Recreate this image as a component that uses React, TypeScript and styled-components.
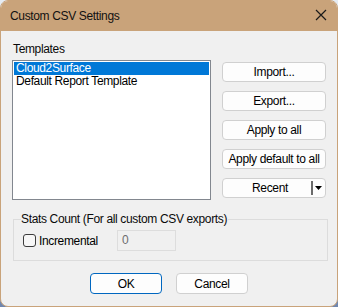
import React, { useState } from "react";
import styled, { createGlobalStyle } from "styled-components";

const GlobalStyle = createGlobalStyle`
    html, body {
        margin: 0;
        padding: 0;
        background: linear-gradient(180deg, #e6ecf3 0%, #6f86ae 100%);
    }
    body {
        font-family: "Liberation Sans", Arial, sans-serif;
        font-size: 12px;
        letter-spacing: -0.35px;
        color: #000000;
    }
`;

const templates = ["Cloud2Surface", "Default Report Template"];

const App = () => {
    const [selected, setSelected] = useState<number>(0);
    const [incremental, setIncremental] = useState<boolean>(false);

    return (
        <>
            <GlobalStyle />
            <Window>
                <TitleBar>
                    <Title>Custom CSV Settings</Title>
                    <CloseButton>
                        <svg width="12" height="12" viewBox="0 0 12 12">
                            <path d="M1 1 L11 11 M11 1 L1 11" stroke="#1a1a1a" strokeWidth="1.2" />
                        </svg>
                    </CloseButton>
                </TitleBar>
                <Body>
                    <Label>Templates</Label>
                    <TemplatesRow>
                        <ListBox>
                            {templates.map((name, id) => (
                                <ListItem key={id} $selected={id === selected} onClick={() => setSelected(id)}>
                                    {name}
                                </ListItem>
                            ))}
                        </ListBox>
                        <ButtonColumn>
                            <SideButton>Import...</SideButton>
                            <SideButton>Export...</SideButton>
                            <SideButton>Apply to all</SideButton>
                            <SideButton>Apply default to all</SideButton>
                            <SplitButton>
                                <SplitLabel>Recent</SplitLabel>
                                <SplitDivider />
                                <SplitArrow>
                                    <svg width="7" height="4" viewBox="0 0 7 4">
                                        <path d="M0 0 H7 L3.5 4 Z" fill="#000000" />
                                    </svg>
                                </SplitArrow>
                            </SplitButton>
                        </ButtonColumn>
                    </TemplatesRow>
                    <GroupBox>
                        <GroupLegend>Stats Count (For all custom CSV exports)</GroupLegend>
                        <GroupRow>
                            <CheckLabel onClick={() => setIncremental(!incremental)}>
                                <CheckBox $checked={incremental}>
                                    {incremental && (
                                        <svg width="9" height="9" viewBox="0 0 9 9">
                                            <path d="M1 4.5 L3.5 7 L8 1.5" stroke="#ffffff" strokeWidth="1.4" fill="none" />
                                        </svg>
                                    )}
                                </CheckBox>
                                Incremental
                            </CheckLabel>
                            <NumberField>0</NumberField>
                        </GroupRow>
                    </GroupBox>
                    <Footer>
                        <DialogButton $primary>OK</DialogButton>
                        <DialogButton>Cancel</DialogButton>
                    </Footer>
                </Body>
            </Window>
        </>
    );
};

const Window = styled.div`
    box-sizing: border-box;
    width: 338px;
    height: 307px;
    display: flex;
    flex-direction: column;
    border: 1px solid #c9a37a;
    border-radius: 8px;
    overflow: hidden;
    background-color: #f0f0f0;
`;

const TitleBar = styled.div`
    display: flex;
    align-items: center;
    justify-content: space-between;
    height: 30px;
    padding: 0 10px 0 9px;
    background-color: #c9a37a;
    flex-shrink: 0;
`;

const Title = styled.span`
    font-size: 12px;
    color: #111111;
    padding-bottom: 1px;
`;

const CloseButton = styled.div`
    display: flex;
    align-items: center;
    justify-content: center;
    width: 12px;
    height: 12px;
    margin-bottom: 2px;
`;

const Body = styled.div`
    display: flex;
    flex-direction: column;
    padding: 10px 10px 0 11px;
    flex: 1;
`;

const Label = styled.div`
    height: 14px;
    line-height: 14px;
    padding-left: 1px;
    margin-top: 1px;
    color: #0a0a0a;
`;

const TemplatesRow = styled.div`
    display: flex;
    flex-direction: row;
    margin-top: 4px;
`;

const ListBox = styled.div`
    box-sizing: border-box;
    width: 199px;
    height: 140px;
    border: 1px solid #82878f;
    background-color: #ffffff;
    padding: 1px;
`;

const ListItem = styled.div<{ $selected?: boolean }>`
    height: 13px;
    line-height: 13px;
    padding-left: 2px;
    background-color: ${(p) => (p.$selected ? "#0078d7" : "transparent")};
    color: ${(p) => (p.$selected ? "#ffffff" : "#000000")};
    white-space: nowrap;
    cursor: default;
`;

const ButtonColumn = styled.div`
    display: flex;
    flex-direction: column;
    gap: 9px;
    margin-left: 11px;
    padding-top: 2px;
`;

const SideButton = styled.button`
    box-sizing: border-box;
    width: 104px;
    height: 20px;
    padding: 0;
    border: 1px solid #d0d0d0;
    border-radius: 4px;
    background-color: #fdfdfd;
    font-family: "Liberation Sans", Arial, sans-serif;
    font-size: 12px;
    letter-spacing: -0.35px;
    color: #000000;
    white-space: nowrap;
`;

const SplitButton = styled.div`
    box-sizing: border-box;
    width: 104px;
    height: 20px;
    display: flex;
    align-items: center;
    border: 1px solid #d0d0d0;
    border-radius: 4px;
    background-color: #fdfdfd;
`;

const SplitLabel = styled.span`
    flex: 1;
    text-align: center;
    padding-left: 6px;
`;

const SplitDivider = styled.span`
    width: 2px;
    height: 14px;
    background-color: #6b6b6b;
`;

const SplitArrow = styled.span`
    display: flex;
    align-items: center;
    justify-content: center;
    width: 11px;
    padding-right: 1px;
`;

const GroupBox = styled.fieldset`
    box-sizing: border-box;
    width: 315px;
    height: 49px;
    margin: 12px 0 0 1px;
    padding: 0 0 0 9px;
    border: 1px solid #dcdcdc;
    min-inline-size: auto;
`;

const GroupLegend = styled.legend`
    padding: 0 1px 0 0;
    margin-left: -2px;
    line-height: 14px;
    color: #0a0a0a;
`;

const GroupRow = styled.div`
    display: flex;
    align-items: center;
    margin-top: 4px;
`;

const CheckLabel = styled.label`
    display: flex;
    align-items: center;
    gap: 3px;
    width: 94px;
    cursor: default;
`;

const CheckBox = styled.span<{ $checked?: boolean }>`
    box-sizing: border-box;
    width: 13px;
    height: 13px;
    border: 1px solid #3c3c3c;
    border-radius: 3px;
    background-color: ${(p) => (p.$checked ? "#0067c0" : "#f7f7f7")};
    display: flex;
    align-items: center;
    justify-content: center;
`;

const NumberField = styled.div`
    box-sizing: border-box;
    width: 59px;
    height: 21px;
    line-height: 19px;
    padding-left: 4px;
    border: 1px solid #dddddd;
    background-color: #f0f0f0;
    color: #6d6d6d;
`;

const Footer = styled.div`
    display: flex;
    justify-content: center;
    gap: 14px;
    margin-top: 12px;
    padding-right: 1px;
`;

const DialogButton = styled.button<{ $primary?: boolean }>`
    box-sizing: border-box;
    width: 72px;
    height: 21px;
    padding: 0;
    border: 1px solid ${(p) => (p.$primary ? "#0067c0" : "#d0d0d0")};
    border-radius: 4px;
    background-color: #fdfdfd;
    font-family: "Liberation Sans", Arial, sans-serif;
    font-size: 12px;
    letter-spacing: -0.35px;
    color: #000000;
`;

export default App;
